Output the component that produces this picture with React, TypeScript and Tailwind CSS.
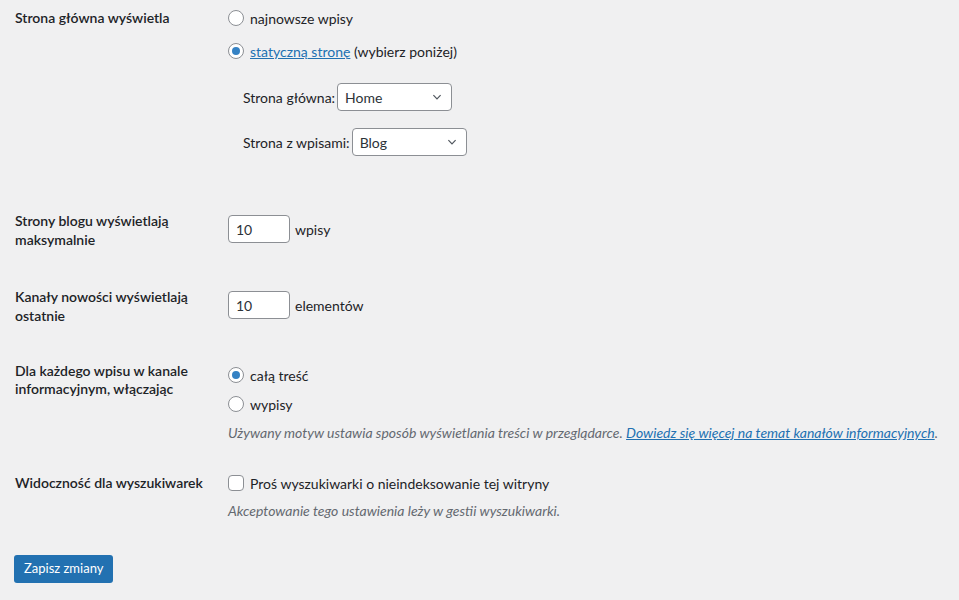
import { useState } from "react";

// Reading settings form (WP-admin look)
const font = "font-['Segoe_UI','Lato',sans-serif]";

function Radio({ checked, onChange }: { checked: boolean; onChange: () => void }) {
  return (
    <span
      onClick={onChange}
      className="w-4 h-4 rounded-full border border-[#8c8f94] bg-white flex items-center justify-center shrink-0 cursor-pointer"
    >
      {checked && <span className="w-2 h-2 rounded-full bg-[#3582c4]" />}
    </span>
  );
}

function Select({ value, width }: { value: string; width: string }) {
  return (
    <div
      className={`${width} h-[28px] rounded border border-[#8c8f94] bg-white flex items-center justify-between pl-[7px] pr-[8px] text-[14px] text-[#2c3338]`}
    >
      <span>{value}</span>
      <svg width="12" height="12" viewBox="0 0 20 20" fill="none">
        <path d="M4 7l6 6 6-6" stroke="#50575e" strokeWidth="2" />
      </svg>
    </div>
  );
}

function NumberInput({ value }: { value: string }) {
  return (
    <div className="w-[62px] h-[28px] rounded border border-[#8c8f94] bg-white flex items-center px-[7px] text-[14px] text-[#2c3338]">
      {value}
    </div>
  );
}

export default function App() {
  const [front, setFront] = useState("page");
  const [feed, setFeed] = useState("full");
  const [noindex, setNoindex] = useState(false);

  return (
    <div className={`${font} min-h-[600px] bg-[#f0f0f1] text-[#1d2327] text-[14px] px-[15px] pt-[9px]`}>
      {/* front page */}
      <div className="flex">
        <div className="w-[213px] shrink-0 font-semibold leading-[18px]">Strona główna wyświetla</div>
        <div className="flex flex-col">
          <label className="flex items-center gap-[6px] h-[18px]">
            <Radio checked={front === "posts"} onChange={() => setFront("posts")} />
            <span>najnowsze wpisy</span>
          </label>
          <label className="flex items-center gap-[6px] h-[18px] mt-[15px]">
            <Radio checked={front === "page"} onChange={() => setFront("page")} />
            <span>
              <a className="text-[#2271b1] underline">statyczną stronę</a> (wybierz poniżej)
            </span>
          </label>
          <div className="flex items-center gap-[2px] pl-[15px] mt-[23px]">
            <span>Strona główna:</span>
            <Select value="Home" width="w-[115px]" />
          </div>
          <div className="flex items-center gap-[2px] pl-[15px] mt-[17px]">
            <span>Strona z wpisami:</span>
            <Select value="Blog" width="w-[115px]" />
          </div>
        </div>
      </div>

      {/* posts per page */}
      <div className="flex mt-[55px]">
        <div className="w-[213px] shrink-0 font-semibold leading-[19px]">
          Strony blogu wyświetlają
          <br />
          maksymalnie
        </div>
        <div className="flex items-center gap-[5px] mt-[4px] self-start">
          <NumberInput value="10" />
          <span>wpisy</span>
        </div>
      </div>

      <div className="flex mt-[38px]">
        <div className="w-[213px] shrink-0 font-semibold leading-[19px]">
          Kanały nowości wyświetlają
          <br />
          ostatnie
        </div>
        <div className="flex items-center gap-[5px] mt-[4px] self-start">
          <NumberInput value="10" />
          <span>elementów</span>
        </div>
      </div>

      {/* feed content */}
      <div className="flex mt-[37px]">
        <div className="w-[213px] shrink-0 font-semibold leading-[18px]">
          Dla każdego wpisu w kanale
          <br />
          informacyjnym, włączając
        </div>
        <div className="flex flex-col mt-[4px]">
          <label className="flex items-center gap-[6px] h-[18px]">
            <Radio checked={feed === "full"} onChange={() => setFeed("full")} />
            <span>całą treść</span>
          </label>
          <label className="flex items-center gap-[6px] h-[18px] mt-[11px]">
            <Radio checked={feed === "excerpt"} onChange={() => setFeed("excerpt")} />
            <span>wypisy</span>
          </label>
          <p className="italic text-[#646970] leading-[18px] mt-[11px] whitespace-nowrap">
            Używany motyw ustawia sposób wyświetlania treści w przeglądarce.{" "}
            <a className="text-[#2271b1] underline">Dowiedz się więcej na temat kanałów informacyjnych</a>.
          </p>
        </div>
      </div>

      {/* search visibility */}
      <div className="flex mt-[32px]">
        <div className="w-[213px] shrink-0 font-semibold leading-[18px]">Widoczność dla wyszukiwarek</div>
        <div className="flex flex-col">
          <label className="flex items-center gap-[6px] h-[18px]">
            <span
              onClick={() => setNoindex(!noindex)}
              className="w-4 h-4 rounded border border-[#8c8f94] bg-white shrink-0 cursor-pointer"
            />
            <span>Proś wyszukiwarki o nieindeksowanie tej witryny</span>
          </label>
          <p className="italic text-[#646970] leading-[18px] mt-[10px]">
            Akceptowanie tego ustawienia leży w gestii wyszukiwarki.
          </p>
        </div>
      </div>

      <button className="mt-[35px] -ml-px h-[28px] px-[10px] rounded-[3px] bg-[#2271b1] text-white text-[13px]">
        Zapisz zmiany
      </button>
    </div>
  );
}
